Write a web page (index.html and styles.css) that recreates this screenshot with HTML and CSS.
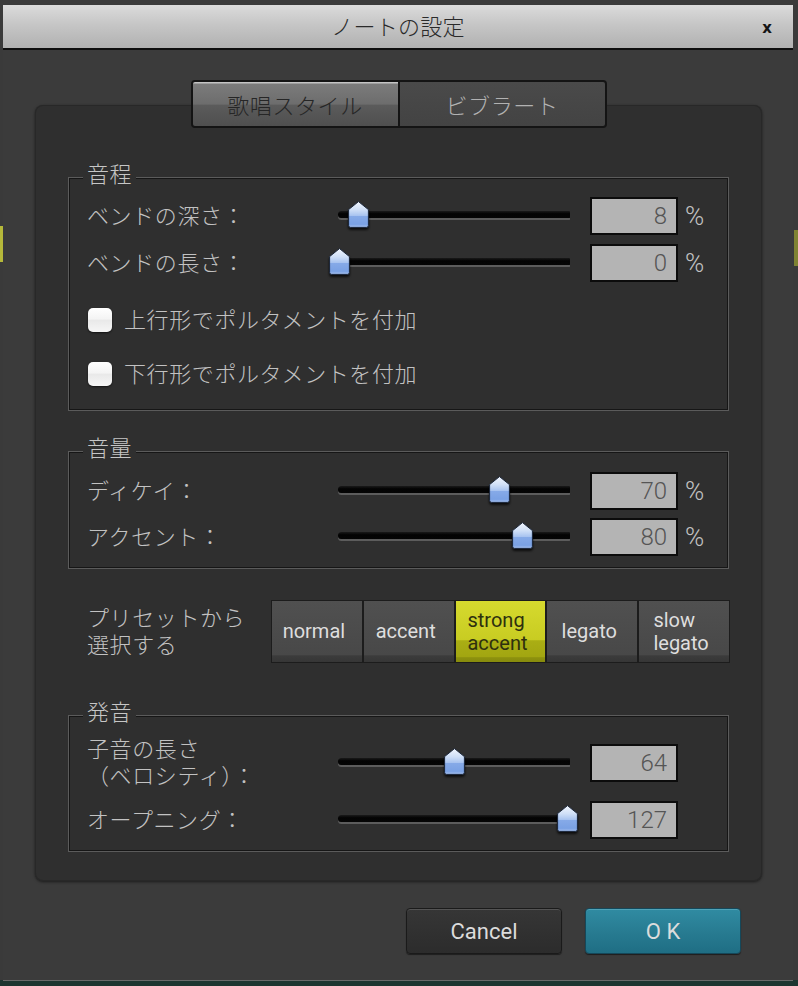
FILE: index.html
```html
<!DOCTYPE html>
<html lang="ja">
<head>
<meta charset="utf-8">
<title>ノートの設定</title>
<link rel="stylesheet" href="styles.css">
</head>
<body>
<svg class="defs" width="0" height="0" aria-hidden="true">
  <defs>
    <linearGradient id="thumbGrad" x1="0" y1="0" x2="0" y2="1">
      <stop offset="0" stop-color="#f2f6fd"/>
      <stop offset="0.32" stop-color="#cfdff7"/>
      <stop offset="0.54" stop-color="#a9c4f0"/>
      <stop offset="0.56" stop-color="#86aae8"/>
      <stop offset="0.88" stop-color="#7aa1e4"/>
      <stop offset="1" stop-color="#a7c1ee"/>
    </linearGradient>
  </defs>
</svg>
<div class="dialog">
  <div class="titlebar">
    <span></span>
    <span class="title">ノートの設定</span>
    <span class="close">x</span>
  </div>
  <div class="body">
    <div class="tabs">
      <div class="tab active">歌唱スタイル</div>
      <div class="tab">ビブラート</div>
    </div>
    <div class="panel">
      <fieldset class="group g-pitch">
        <legend>音程</legend>
        <div class="row">
          <div class="label">ベンドの深さ：</div>
          <div class="slider"><div class="track"></div><svg class="thumb" viewBox="0 0 21 27" style="left:10px"><path d="M10.5 0.6 L20.4 8.6 V24.4 Q20.4 26.4 18.4 26.4 H2.6 Q0.6 26.4 0.6 24.4 V8.6 Z" fill="url(#thumbGrad)" stroke="#1a2538" stroke-width="1"/></svg></div>
          <div class="value">8</div>
          <div class="unit">%</div>
        </div>
        <div class="row">
          <div class="label">ベンドの長さ：</div>
          <div class="slider"><div class="track"></div><svg class="thumb" viewBox="0 0 21 27" style="left:-9px"><path d="M10.5 0.6 L20.4 8.6 V24.4 Q20.4 26.4 18.4 26.4 H2.6 Q0.6 26.4 0.6 24.4 V8.6 Z" fill="url(#thumbGrad)" stroke="#1a2538" stroke-width="1"/></svg></div>
          <div class="value">0</div>
          <div class="unit">%</div>
        </div>
        <div class="check check-up">
          <span class="box"></span>
          <span class="check-label">上行形でポルタメントを付加</span>
        </div>
        <div class="check check-down">
          <span class="box"></span>
          <span class="check-label">下行形でポルタメントを付加</span>
        </div>
      </fieldset>

      <fieldset class="group g-volume">
        <legend>音量</legend>
        <div class="row">
          <div class="label">ディケイ：</div>
          <div class="slider"><div class="track"></div><svg class="thumb" viewBox="0 0 21 27" style="left:151px"><path d="M10.5 0.6 L20.4 8.6 V24.4 Q20.4 26.4 18.4 26.4 H2.6 Q0.6 26.4 0.6 24.4 V8.6 Z" fill="url(#thumbGrad)" stroke="#1a2538" stroke-width="1"/></svg></div>
          <div class="value">70</div>
          <div class="unit">%</div>
        </div>
        <div class="row row-tight">
          <div class="label">アクセント：</div>
          <div class="slider"><div class="track"></div><svg class="thumb" viewBox="0 0 21 27" style="left:174px"><path d="M10.5 0.6 L20.4 8.6 V24.4 Q20.4 26.4 18.4 26.4 H2.6 Q0.6 26.4 0.6 24.4 V8.6 Z" fill="url(#thumbGrad)" stroke="#1a2538" stroke-width="1"/></svg></div>
          <div class="value">80</div>
          <div class="unit">%</div>
        </div>
      </fieldset>

      <div class="presets">
        <div class="presets-label">プリセットから<br>選択する</div>
        <div class="preset-buttons">
          <div class="pbtn"><span>normal</span></div>
          <div class="pbtn"><span>accent</span></div>
          <div class="pbtn on"><span>strong<br>accent</span></div>
          <div class="pbtn"><span>legato</span></div>
          <div class="pbtn"><span>slow<br>legato</span></div>
        </div>
      </div>

      <fieldset class="group g-pron">
        <legend>発音</legend>
        <div class="row row-tall">
          <div class="label">子音の長さ<br>（ベロシティ）：</div>
          <div class="slider"><div class="track"></div><svg class="thumb" viewBox="0 0 21 27" style="left:106px"><path d="M10.5 0.6 L20.4 8.6 V24.4 Q20.4 26.4 18.4 26.4 H2.6 Q0.6 26.4 0.6 24.4 V8.6 Z" fill="url(#thumbGrad)" stroke="#1a2538" stroke-width="1"/></svg></div>
          <div class="value">64</div>
        </div>
        <div class="row row-after-tall">
          <div class="label">オープニング：</div>
          <div class="slider"><div class="track"></div><svg class="thumb" viewBox="0 0 21 27" style="left:219px"><path d="M10.5 0.6 L20.4 8.6 V24.4 Q20.4 26.4 18.4 26.4 H2.6 Q0.6 26.4 0.6 24.4 V8.6 Z" fill="url(#thumbGrad)" stroke="#1a2538" stroke-width="1"/></svg></div>
          <div class="value">127</div>
        </div>
      </fieldset>
    </div>

    <div class="actions">
      <div class="btn cancel">Cancel</div>
      <div class="btn ok">O K</div>
    </div>
  </div>
</div>
</body>
</html>
```

FILE: styles.css
```css
* {
  box-sizing: border-box;
}

html,
body {
  margin: 0;
  padding: 0;
}

body {
  width: 798px;
  height: 986px;
  overflow: hidden;
  font-family: Roboto, "Noto Sans CJK JP", sans-serif;
  background:
    linear-gradient(#b5b83a, #b5b83a) 0 226px / 3px 36px no-repeat,
    linear-gradient(#7f8232, #7f8232) 794px 230px / 4px 36px no-repeat,
    linear-gradient(#1d3530, #1d3530) 0 980px / 100% 6px no-repeat,
    #3a3a3a;
}

.defs {
  display: block;
  width: 0;
  height: 0;
  overflow: hidden;
}

.dialog {
  margin: 5px 5px 0 3px;
  width: 790px;
  background: #3b3b3b;
  border-bottom: 1px solid #6a6a6a;
}

/* title bar */
.titlebar {
  height: 45px;
  display: grid;
  grid-template-columns: 1fr auto 1fr;
  align-items: center;
  padding-bottom: 4px;
  background: linear-gradient(#dbdbdb, #c6c6c6 45%, #b1b1b1);
  border-bottom: 2px solid #0e0e0e;
}

.title {
  font-family: "Noto Sans CJK JP", sans-serif;
  font-weight: 300;
  font-size: 22px;
  line-height: 30px;
  color: #2a2a2a;
  letter-spacing: 0.3px;
}

.close {
  justify-self: end;
  margin-right: 21px;
  margin-top: 6px;
  font-family: "DejaVu Sans", sans-serif;
  font-weight: bold;
  font-size: 15px;
  color: #141414;
}

/* body */
.body {
  padding: 30px 31px 26px 32px;
}

.tabs {
  position: relative;
  z-index: 1;
  display: flex;
  gap: 2px;
  width: 416px;
  margin: 0 auto -23px;
  border: 2px solid #141414;
  border-radius: 4px;
  background: #141414;
}

.tab {
  flex: 1;
  height: 44px;
  display: flex;
  align-items: center;
  justify-content: center;
  font-family: "Noto Sans CJK JP", sans-serif;
  font-weight: 300;
  font-size: 22px;
  letter-spacing: 0.6px;
  background: linear-gradient(#4a4a4a, #434343);
  color: #b2b2b2;
  border-radius: 0 2px 2px 0;
}

.tab.active {
  background: linear-gradient(#c4c4c4 0, #c4c4c4 1px, #7b7b7b 2px, #6d6d6d 50%, #5b5b5b 53%, #4f4f4f 100%);
  color: #262626;
  border-radius: 2px 0 0 2px;
}

.panel {
  background: #2f2f2f;
  border-radius: 8px;
  box-shadow: 0 1px 3px rgba(0, 0, 0, 0.55), inset 0 0 0 1px #282828;
  padding: 54px 33px 29px;
}

/* group boxes */
.group {
  margin: 0;
  min-inline-size: 0;
  padding: 2px 18px 17px;
  border: 1px solid #5b5b5b;
  box-shadow: inset 0 0 0 1px #161616;
}

.group legend {
  padding: 0 4px 10px;
  margin-left: -4px;
  font-family: "Noto Sans CJK JP", sans-serif;
  font-weight: 300;
  font-size: 22px;
  line-height: 26px;
  letter-spacing: 0.5px;
  color: #c6c6c6;
  background: linear-gradient(#2f2f2f, #2f2f2f) 0 0 / 100% 20px no-repeat;
}

.g-volume {
  margin-top: 22px;
  padding-top: 3px;
  padding-bottom: 12px;
}

.g-pron {
  margin-top: 34px;
  padding-top: 3px;
  padding-bottom: 12px;
}

.row {
  display: flex;
  align-items: center;
  height: 38px;
}

.row + .row {
  margin-top: 9px;
}

.row.row-tight {
  margin-top: 8px;
}

.row.row-tall {
  height: 54px;
}

.row.row-after-tall {
  margin-top: 11px;
}

.label {
  flex: none;
  width: 251px;
  font-weight: 300;
  font-size: 22px;
  line-height: 27px;
  letter-spacing: 0.6px;
  color: #c2c2c2;
}

.slider {
  flex: none;
  position: relative;
  width: 232px;
  height: 38px;
  display: flex;
  align-items: flex-start;
}

.track {
  margin-top: 14px;
  width: 100%;
  height: 7px;
  background: linear-gradient(#1a1a1a, #030303 40%, #050505);
  border-radius: 4px 1px 1px 4px;
  box-shadow: 0 2px 0 #5c5c5c;
}

.thumb {
  position: absolute;
  top: 4px;
  width: 21px;
  height: 27px;
  filter: drop-shadow(0 2px 1px rgba(0, 0, 0, 0.75));
}

.value {
  flex: none;
  margin-left: 20px;
  width: 88px;
  height: 38px;
  padding-right: 9px;
  background: #b4b4b4;
  border: 2px solid #0c0c0c;
  text-align: right;
  font-weight: 300;
  font-size: 24px;
  line-height: 34px;
  color: #555555;
}

.unit {
  margin-left: 7px;
  font-weight: 300;
  font-size: 26px;
  line-height: 30px;
  color: #c2c2c2;
}

/* checkboxes */
.check {
  display: flex;
  align-items: center;
  gap: 12px;
  height: 38px;
}

.check-up {
  margin-top: 19px;
}

.check-down {
  margin-top: 16px;
}

.box {
  flex: none;
  width: 24px;
  height: 24px;
  margin-left: 1px;
  border-radius: 5px;
  background: linear-gradient(#ffffff, #f4f4f4 45%, #e9e9e9 52%, #f6f6f6);
  box-shadow: 0 1px 2px rgba(0, 0, 0, 0.6);
}

.check-label {
  font-weight: 300;
  font-size: 22px;
  line-height: 27px;
  letter-spacing: 0.6px;
  color: #c2c2c2;
}

/* presets */
.presets {
  display: flex;
  align-items: center;
  margin-top: 31px;
  padding-left: 19px;
}

.presets-label {
  flex: none;
  width: 184px;
  font-weight: 300;
  font-size: 22px;
  line-height: 27px;
  letter-spacing: 0.6px;
  color: #c2c2c2;
}

.preset-buttons {
  flex: none;
  display: grid;
  grid-template-columns: repeat(5, 1fr);
  gap: 2px;
  width: 459px;
  height: 63px;
  padding: 1px;
  margin-right: -1px;
  background: #1c1c1c;
}

.pbtn {
  display: flex;
  align-items: center;
  justify-content: center;
  padding-right: 6px;
  background: linear-gradient(#505050, #484848 88%, #3b3b3b 90%, #363636);
  color: #dedede;
  font-family: Roboto, sans-serif;
  font-size: 20px;
  line-height: 23px;
  text-align: left;
}

.pbtn.on {
  background: linear-gradient(#d6da2e, #c8cc22 64%, #aaae14 65%, #a2a611 91%, #8d910e 93%, #878b0d);
  color: #2e300e;
}

/* action buttons */
.actions {
  display: flex;
  justify-content: flex-end;
  gap: 23px;
  margin-top: 27px;
  padding-right: 21px;
}

.btn {
  width: 156px;
  height: 46px;
  border-radius: 4px;
  display: flex;
  align-items: center;
  justify-content: center;
  font-family: Roboto, sans-serif;
  font-size: 22px;
  color: #dcdcdc;
}

.cancel {
  background: linear-gradient(#363636, #2c2c2c);
  border: 1px solid #1a1a1a;
  box-shadow: inset 0 1px 0 #545454, 0 1px 1px rgba(0, 0, 0, 0.5);
}

.ok {
  background: linear-gradient(#308ba2, #287c92 50%, #1f6e84);
  border: 1px solid #15485a;
  box-shadow: inset 0 1px 0 #4fa3b8, 0 1px 1px rgba(0, 0, 0, 0.5);
}
```
